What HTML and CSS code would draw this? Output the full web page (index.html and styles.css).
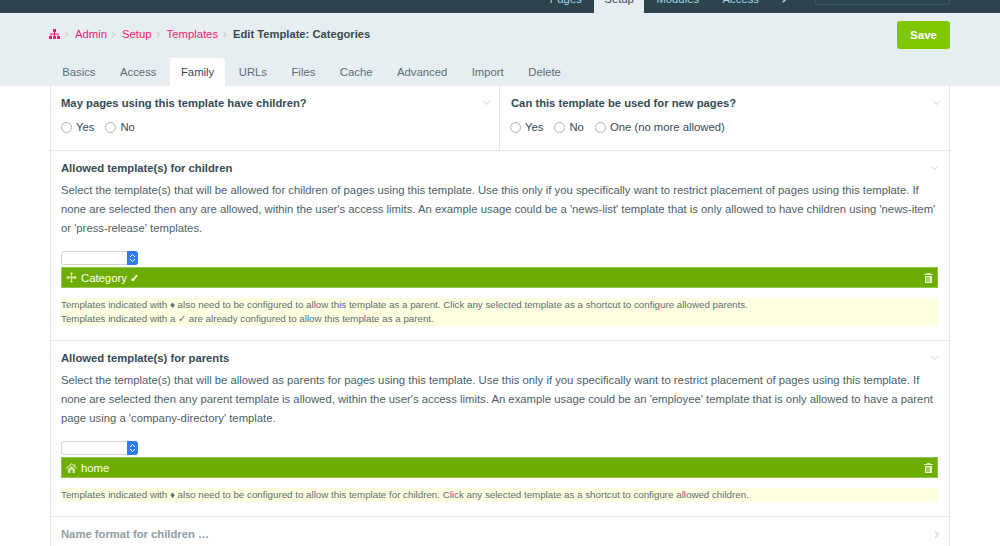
FILE: index.html
```html
<!DOCTYPE html>
<html lang="en">
<head>
<meta charset="utf-8">
<title>Edit Template: Categories</title>
<link rel="stylesheet" href="styles.css">
</head>
<body>
<header class="masthead">
  <nav class="topnav">
    <a class="topitem">Pages</a>
    <a class="topitem active">Setup</a>
    <a class="topitem modules">Modules</a>
    <a class="topitem">Access</a>
    <a class="topitem tool"><svg width="7" height="7" viewBox="0 0 9 9"><path d="M1 8 L6 3 M5 1 L8 1 L8 4" stroke="#9fd6ea" stroke-width="2" fill="none"/></svg></a>
    <div class="search"></div>
  </nav>
</header>
<section class="headline">
  <div class="headrow">
    <div class="crumbs">
      <svg class="tree" width="11" height="10" viewBox="0 0 11 10"><path fill="#eb1d72" d="M4 0h3v3H6v1.500h3.500V7H11v3H8V7h.700V5.500H6V7h1v3H4V7h1V5.500H2.300V7H3v3H0V7h1.500V4.500H5V3H4z"/></svg>
      <span class="sep">›</span><a class="crumb">Admin</a>
      <span class="sep">›</span><a class="crumb">Setup</a>
      <span class="sep">›</span><a class="crumb">Templates</a>
      <span class="sep">›</span><strong class="title">Edit Template: Categories</strong>
    </div>
    <button class="save">Save</button>
  </div>
  <ul class="tabs">
    <li class="tab">Basics</li>
    <li class="tab">Access</li>
    <li class="tab current">Family</li>
    <li class="tab">URLs</li>
    <li class="tab">Files</li>
    <li class="tab">Cache</li>
    <li class="tab">Advanced</li>
    <li class="tab">Import</li>
    <li class="tab">Delete</li>
  </ul>
</section>
<main class="form">
  <div class="row two">
    <div class="field half">
      <h3 class="label">May pages using this template have children?<span class="chev"></span></h3>
      <div class="radios">
        <label class="radio"><i class="dot"></i>Yes</label>
        <label class="radio"><i class="dot"></i>No</label>
      </div>
    </div>
    <div class="field half second">
      <h3 class="label">Can this template be used for new pages?<span class="chev"></span></h3>
      <div class="radios">
        <label class="radio"><i class="dot"></i>Yes</label>
        <label class="radio"><i class="dot"></i>No</label>
        <label class="radio"><i class="dot"></i>One (no more allowed)</label>
      </div>
    </div>
  </div>
  <div class="field block first">
    <h3 class="label">Allowed template(s) for children<span class="chev"></span></h3>
    <p class="desc">Select the template(s) that will be allowed for children of pages using this template. Use this only if you specifically want to restrict placement of pages using this template. If<br>none are selected then any are allowed, within the user's access limits. An example usage could be a 'news-list' template that is only allowed to have children using 'news-item'<br>or 'press-release' templates.</p>
    <div class="select"><span class="stepper"><svg width="7" height="10" viewBox="0 0 7 10"><path d="M1 4 L3.500 1.500 L6 4 M1 6 L3.500 8.500 L6 6" stroke="#fff" fill="none"/></svg></span></div>
    <div class="item">
      <svg class="ico" width="11" height="11" viewBox="0 0 11 11"><path fill="#cfe6a8" d="M5.500 0 7.300 2H6v2.500h2.500V3.200L11 5.500 8.500 7.800V6.500H6V9h1.300L5.500 11 3.700 9H5V6.500H2.500v1.300L0 5.500 2.500 3.200v1.300H5V2H3.700z"/></svg>
      <span class="name">Category <b class="check">✓</b></span>
      <svg class="trash" width="9" height="10" viewBox="0 0 9 10"><path fill="#e4f2cc" fill-rule="evenodd" d="M3 0h3l.5 1H9v1H0V1h2.500zM1 3h7v7H1zM2.500 4v5h1V4zM4.500 4v5h1V4z"/></svg>
    </div>
    <p class="note">Templates indicated with ♦ also need to be configured to allow this template as a parent. Click any selected template as a shortcut to configure allowed parents.<br>Templates indicated with a ✓ are already configured to allow this template as a parent.</p>
  </div>
  <div class="field block">
    <h3 class="label">Allowed template(s) for parents<span class="chev"></span></h3>
    <p class="desc">Select the template(s) that will be allowed as parents for pages using this template. Use this only if you specifically want to restrict placement of pages using this template. If<br>none are selected then any parent template is allowed, within the user's access limits. An example usage could be an 'employee' template that is only allowed to have a parent<br>page using a 'company-directory' template.</p>
    <div class="select"><span class="stepper"><svg width="7" height="10" viewBox="0 0 7 10"><path d="M1 4 L3.500 1.500 L6 4 M1 6 L3.500 8.500 L6 6" stroke="#fff" fill="none"/></svg></span></div>
    <div class="item">
      <svg class="ico" width="11" height="10" viewBox="0 0 11 10"><path fill="#cfe6a8" d="M5.500 0 8 2.200V1h1.300v2.400L11 5l-.7.700-4.800-4.200L.7 5.700 0 5zM2 6l3.500-3L9 6v4H6.500V7h-2v3H2z"/></svg>
      <span class="name">home</span>
      <svg class="trash" width="9" height="10" viewBox="0 0 9 10"><path fill="#e4f2cc" fill-rule="evenodd" d="M3 0h3l.5 1H9v1H0V1h2.500zM1 3h7v7H1zM2.500 4v5h1V4zM4.500 4v5h1V4z"/></svg>
    </div>
    <p class="note">Templates indicated with ♦ also need to be configured to allow this template for children. Click any selected template as a shortcut to configure allowed children.</p>
  </div>
  <div class="field collapsed">
    <h3 class="label">Name format for children …<span class="chev right"></span></h3>
  </div>
</main>
</body>
</html>
```
FILE: styles.css
```css
* { box-sizing: border-box; }
html, body { margin: 0; padding: 0; }
body {
  height: 546px;
  overflow: hidden;
  background: #fff;
  color: #354b54;
  font: 11.300px/18px "Liberation Sans", Arial, sans-serif;
}
.masthead {
  height: 13px;
  background: #2d444c;
  overflow: hidden;
  padding-right: 50px;
}
.topnav {
  display: flex;
  justify-content: flex-end;
  align-items: flex-end;
  height: 13px;
}
.topitem {
  display: block;
  height: 24px;
  line-height: 20px;
  padding: 0 12px;
  color: #9fd6ea;
  font-size: 11.300px;
  flex: none;
}
.topitem.modules { padding-right: 11.500px; }
.topitem.active { background: #e7eef1; color: #354b54; padding: 0 10.500px; }
.tool { padding: 0 26px 0 11px; line-height: 16px; }
.tool svg { display: block; margin-top: 7px; }
.search {
  width: 135px;
  height: 20px;
  flex: none;
  margin-bottom: 8px;
  border: 1px solid #3d5a64;
  border-radius: 3px;
}
.headline {
  height: 73px;
  background: #e7eef1;
  padding: 8px 50px 0;
  display: flex;
  flex-direction: column;
}
.headrow {
  height: 37px;
  display: flex;
  justify-content: space-between;
  align-items: flex-start;
}
.crumbs {
  display: flex;
  align-items: center;
  height: 26px;
  color: #eb1d72;
  margin-left: -1px;
}
.tree { margin-right: 3px; }
.sep { color: #c5ced2; margin-right: 5px; width: 7px; text-align: center; font-size: 13px; }
.crumb { margin-right: 3px; }
.title { color: #354b54; font-size: 11.200px; }
.save {
  width: 53px;
  height: 28px;
  border: 0;
  border-radius: 3px;
  background: #7fc800;
  color: #fff;
  font: bold 11.500px "Liberation Sans", Arial, sans-serif;
}
.tabs {
  list-style: none;
  display: flex;
  margin: 0;
  padding: 0;
  height: 28px;
}
.tab {
  padding: 0 12.250px;
  line-height: 29px;
  color: #5a6e76;
}
.tab.current {
  background: #fff;
  color: #354b54;
  border-radius: 3px 3px 0 0;
  padding: 0 11.250px;
  margin: 0 1px;
}
.form {
  margin: 0 50px;
  border-left: 1px solid #dfe8ec;
  border-right: 1px solid #dfe8ec;
}
.row.two { display: flex; border-bottom: 1px solid #dfe8ec; }
.half { flex: 0 0 448px; height: 64px; padding: 8px 10px 0; }
.half.second { flex: 1; border-left: 1px solid #dfe8ec; }
.half.second .label { margin-left: 1px; }
.label {
  position: relative;
  margin: 0;
  font-size: 11.250px;
  line-height: 18px;
  font-weight: bold;
  color: #354b54;
}
.chev {
  position: absolute;
  right: 1px;
  top: 5px;
  width: 5px;
  height: 5px;
  border-right: 1px solid #d5e0e5;
  border-bottom: 1px solid #d5e0e5;
  transform: rotate(45deg);
}
.half .chev { right: 0; }
.chev.right { transform: rotate(-45deg); top: 7px; border-color: #c5d0d5; }
.radios { display: flex; gap: 11px; margin-top: 6px; }
.radio { display: flex; align-items: center; }
.dot {
  width: 11px;
  height: 11px;
  margin-right: 4px;
  border: 1px solid #a9b2b6;
  border-radius: 50%;
  background: #fff;
}
.block { padding: 8px 11px 0 10px; border-bottom: 1px solid #dfe8ec; height: 176px; }
.block.first { height: 190px; }
.desc {
  margin: 4px 0 0;
  line-height: 19px;
  white-space: nowrap;
  color: #4b5f67;
}
.select {
  margin-top: 13px;
  width: 77px;
  height: 14px;
  border: 1px solid #cfd4d6;
  border-radius: 3px;
  background: #fff;
  position: relative;
}
.stepper {
  position: absolute;
  right: -1px;
  top: -1px;
  width: 11px;
  height: 14px;
  border-radius: 0 3px 3px 0;
  background: #2f7df0;
  display: flex;
  align-items: center;
  justify-content: center;
}
.item {
  height: 21px;
  margin-top: 2px;
  background: #6dac00;
  border: 1px solid #93c64a;
  display: flex;
  align-items: center;
  padding: 0 4px;
  color: #fff;
}
.ico { margin-right: 4px; }
.name { flex: 1; }
.check { font-weight: bold; }
.note {
  margin: 10px 0 0;
  background: #fdffe0;
  color: #5f6f72;
  font-size: 9.750px;
  line-height: 14px;
  white-space: nowrap;
}
.collapsed { padding: 8px 10px; }
.collapsed .label { color: #8f9ea5; }
```
